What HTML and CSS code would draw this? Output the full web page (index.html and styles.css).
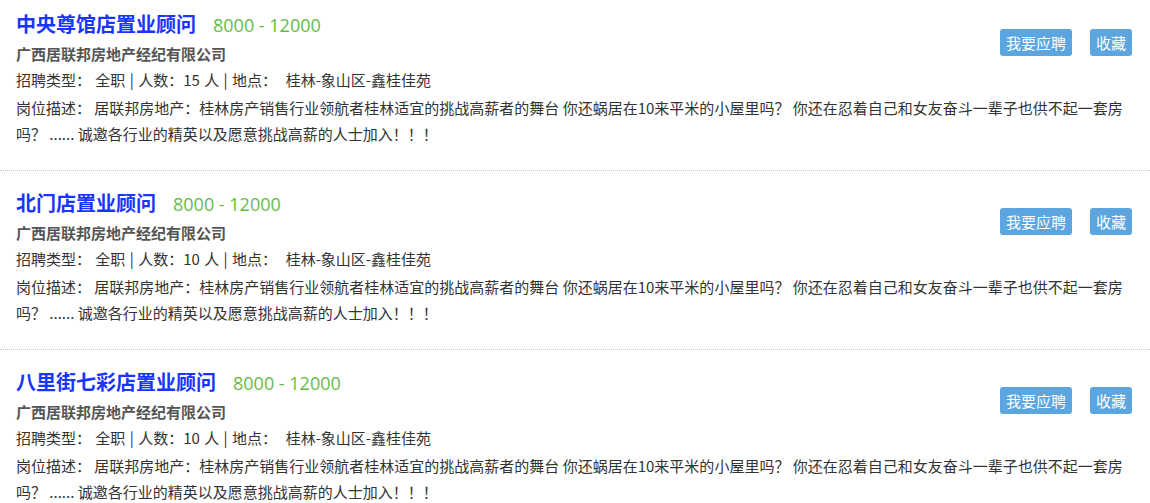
FILE: index.html
```html
<!DOCTYPE html>
<html lang="zh-CN">
<head>
<meta charset="utf-8">
<title>职位列表</title>
<link rel="stylesheet" href="styles.css">
</head>
<body>
<div class="job-list">
  <div class="job">
    <div class="job-head">
      <div class="job-info">
        <div class="job-title-row"><a class="job-title">中央尊馆店置业顾问</a><span class="salary">8000 - 12000</span></div>
        <div class="company">广西居联邦房地产经纪有限公司</div>
        <div class="meta">招聘类型： 全职 | 人数：15 人 | 地点：&nbsp; 桂林-象山区-鑫桂佳苑</div>
      </div>
      <div class="actions"><span class="btn">我要应聘</span><span class="btn">收藏</span></div>
    </div>
    <div class="desc">岗位描述： 居联邦房地产：桂林房产销售行业领航者桂林适宜的挑战高薪者的舞台 你还蜗居在10来平米的小屋里吗？ 你还在忍着自己和女友奋斗一辈子也供不起一套房吗？ ...... 诚邀各行业的精英以及愿意挑战高薪的人士加入！！！</div>
  </div>
  <div class="job">
    <div class="job-head">
      <div class="job-info">
        <div class="job-title-row"><a class="job-title">北门店置业顾问</a><span class="salary">8000 - 12000</span></div>
        <div class="company">广西居联邦房地产经纪有限公司</div>
        <div class="meta">招聘类型： 全职 | 人数：10 人 | 地点：&nbsp; 桂林-象山区-鑫桂佳苑</div>
      </div>
      <div class="actions"><span class="btn">我要应聘</span><span class="btn">收藏</span></div>
    </div>
    <div class="desc">岗位描述： 居联邦房地产：桂林房产销售行业领航者桂林适宜的挑战高薪者的舞台 你还蜗居在10来平米的小屋里吗？ 你还在忍着自己和女友奋斗一辈子也供不起一套房吗？ ...... 诚邀各行业的精英以及愿意挑战高薪的人士加入！！！</div>
  </div>
  <div class="job">
    <div class="job-head">
      <div class="job-info">
        <div class="job-title-row"><a class="job-title">八里街七彩店置业顾问</a><span class="salary">8000 - 12000</span></div>
        <div class="company">广西居联邦房地产经纪有限公司</div>
        <div class="meta">招聘类型： 全职 | 人数：10 人 | 地点：&nbsp; 桂林-象山区-鑫桂佳苑</div>
      </div>
      <div class="actions"><span class="btn">我要应聘</span><span class="btn">收藏</span></div>
    </div>
    <div class="desc">岗位描述： 居联邦房地产：桂林房产销售行业领航者桂林适宜的挑战高薪者的舞台 你还蜗居在10来平米的小屋里吗？ 你还在忍着自己和女友奋斗一辈子也供不起一套房吗？ ...... 诚邀各行业的精英以及愿意挑战高薪的人士加入！！！</div>
  </div>
</div>
</body>
</html>
```

FILE: styles.css
```css
* { box-sizing: border-box; }
html, body {
  margin: 0;
  padding: 0;
  background: #fff;
}
body {
  font-family: "Noto Sans CJK SC", "Noto Sans", sans-serif;
  font-size: 15px;
  color: #333;
  overflow: hidden;
}
.job-list {
  display: flex;
  flex-direction: column;
}
.job {
  padding: 17px 16px 23px 16px;
  border-bottom: 1px dotted #c8c8c8;
}
.job:first-child {
  padding-top: 9px;
}
.job-head {
  display: flex;
  justify-content: space-between;
  align-items: flex-start;
}
.job-title-row {
  display: flex;
  align-items: baseline;
  height: 30px;
  line-height: 30px;
  margin-bottom: 2px;
}
.job-title {
  font-size: 20px;
  font-weight: bold;
  color: #1a35ff;
  text-decoration: none;
}
.salary {
  margin-left: 17px;
  font-family: "Open Sans", "Noto Sans", sans-serif;
  font-size: 18px;
  color: #66bb46;
}
.company {
  font-weight: bold;
  color: #555;
  line-height: 26px;
}
.meta {
  line-height: 26px;
  margin-bottom: 2px;
  word-spacing: 1px;
}
.actions {
  display: flex;
  gap: 18px;
  margin-top: 20px;
  margin-right: 2px;
}
.btn {
  display: inline-block;
  height: 27px;
  line-height: 27px;
  padding: 0 6px;
  background: #5ba6e0;
  color: #fff;
  border-radius: 3px;
  font-size: 15px;
}
.desc {
  line-height: 26px;
}
```
